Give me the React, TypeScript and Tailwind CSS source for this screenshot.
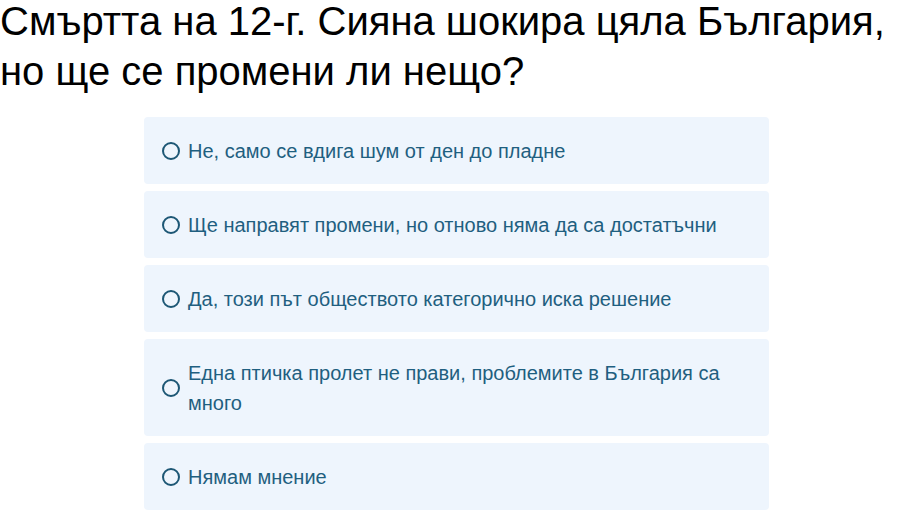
const options = [
  "Не, само се вдига шум от ден до пладне",
  "Ще направят промени, но отново няма да са достатъчни",
  "Да, този път обществото категорично иска решение",
  "Една птичка пролет не прави, проблемите в България са много",
  "Нямам мнение",
];

export default function App() {
  return (
    <div className="min-h-screen bg-white font-['Liberation_Sans',Arial,sans-serif]">
      <h1 className="-mt-[4px] text-[40px] leading-[50px] text-black">
        Смъртта на 12-г. Сияна шокира цяла България, но ще се промени ли нещо?
      </h1>
      <div className="mx-auto mt-[21px] flex w-[625px] flex-col gap-[7px]">
        {options.map((option) => (
          <label
            key={option}
            className="flex cursor-pointer items-center gap-[8px] rounded bg-[#eef5fd] py-[18.5px] pr-[18px] pl-[18px]"
          >
            <span className="h-[18px] w-[18px] shrink-0 rounded-full border-2 border-[#1d5775]" />
            <span className="text-[20px] leading-[30px] text-[#1f5f80]">
              {option}
            </span>
          </label>
        ))}
      </div>
    </div>
  );
}
